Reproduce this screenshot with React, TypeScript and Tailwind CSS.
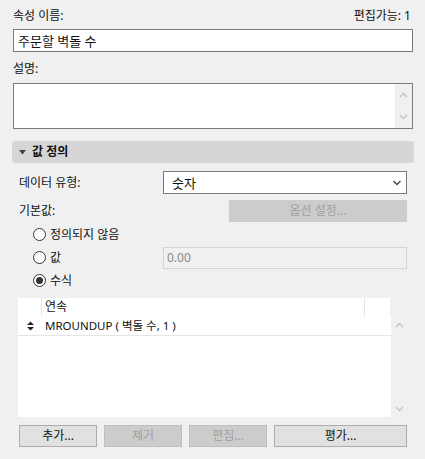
import React from "react";

const F = { fontFamily: '"Segoe UI", "Noto Sans", "Noto Sans CJK KR", sans-serif' };

function ChevUp({ c = "#c4c4c4" }: { c?: string }) {
  return (
    <svg width="9" height="6" viewBox="0 0 9 6">
      <path d="M1 5 L4.5 1.5 L8 5" fill="none" stroke={c} strokeWidth="1.5" />
    </svg>
  );
}
function ChevDown({ c = "#c4c4c4", w = 9 }: { c?: string; w?: number }) {
  return (
    <svg width={w} height="6" viewBox="0 0 9 6">
      <path d="M1 1 L4.5 4.5 L8 1" fill="none" stroke={c} strokeWidth="1.3" />
    </svg>
  );
}

function Radio({ checked, label }: { checked?: boolean; label: string }) {
  return (
    <div className="flex items-center h-[23px]">
      <div className="w-[13px] h-[13px] rounded-full border border-[#333] bg-white flex items-center justify-center">
        {checked && <div className="w-[7px] h-[7px] rounded-full bg-[#333]" />}
      </div>
      <span className="ml-[4px]">{label}</span>
    </div>
  );
}

function Btn({ label, w, disabled }: { label: string; w: string; disabled?: boolean }) {
  return (
    <div
      className={
        "h-[22px] flex items-center justify-center border " +
        w +
        (disabled
          ? " bg-[#cccccc] border-[#bfbfbf] text-[#a0a0a0]"
          : " bg-[#e1e1e1] border-[#adadad] text-[#111]")
      }
    >
      {label}
    </div>
  );
}

export default function App() {
  return (
    <div
      style={F}
      className="w-[425px] h-[459px] bg-[#f0f0f0] text-[12px] leading-[16px] text-[#111] overflow-hidden"
    >
      <div className="px-[13px]">
        <div className="flex justify-between pt-[8px] h-[29px]">
          <span>속성 이름:</span>
          <span className="mr-[1px]">편집가능: 1</span>
        </div>
        <div className="h-[23px] w-[400px] border border-[#7a7a7a] bg-white flex items-center pl-[4px] text-[13px]">
          주문할 벽돌 수
        </div>
        <div className="h-[31px] pt-[9px]">설명:</div>
        <div className="h-[46px] w-[400px] border border-[#7a7a7a] bg-white flex justify-end">
          <div className="w-[17px] bg-[#f0f0f0] flex flex-col items-center justify-between py-[8px]">
            <ChevUp />
            <ChevDown />
          </div>
        </div>
      </div>

      <div className="mx-[12px] mt-[12px] h-[22px] w-[402px] rounded-[3px] bg-[#d6d6d6] flex items-center pl-[7px] font-bold">
        <svg width="7" height="5" viewBox="0 0 7 5" className="mr-[6px]">
          <path d="M0 0 L7 0 L3.5 4.5 Z" fill="#444" />
        </svg>
        <span>값 정의</span>
      </div>

      <div className="pl-[19px] pr-[18px]">
        <div className="flex items-center justify-between mt-[8px] h-[23px]">
          <span>데이터 유형:</span>
          <div className="w-[244px] h-[23px] border border-[#7a7a7a] bg-white flex items-center justify-between pl-[8px] pr-[4px] text-[13px]">
            <span>숫자</span>
            <ChevDown c="#444" w={10} />
          </div>
        </div>
        <div className="flex items-center justify-between mt-[6px] h-[22px]">
          <span>기본값:</span>
          <div className="w-[178px] h-[22px] bg-[#cccccc] flex items-center justify-center text-[#a0a0a0]">
            옵션 설정...
          </div>
        </div>
        <div className="pl-[14px] mt-[1px]">
          <Radio label="정의되지 않음" />
          <div className="flex items-center justify-between">
            <Radio label="값" />
            <div className="w-[244px] h-[22px] border border-[#d4d4d4] bg-[#f0f0f0] flex items-center pl-[3px] text-[#8a8a8a]">
              0.00
            </div>
          </div>
          <Radio checked label="수식" />
        </div>

        <div className="mt-[6px] ml-[-1px] flex">
          <div className="w-[374px] h-[119px] flex flex-col">
            <div className="h-[18px] w-[372px] bg-white flex">
              <div className="w-[24px] border-r border-[#e3e3e3]" />
              <div className="flex-1 border-r border-[#e3e3e3] pl-[3px] flex items-center">연속</div>
              <div className="w-[25px]" />
            </div>
            <div className="flex-1 bg-white">
              <div className="h-[20px] flex items-center border-b border-[#e5e5e5]">
                <div className="w-[24px] flex justify-center">
                  <svg width="7" height="10" viewBox="0 0 7 10">
                    <path d="M0 4 L3.5 0.5 L7 4 Z M0 6 L3.5 9.5 L7 6 Z" fill="#222" />
                  </svg>
                </div>
                <span className="pl-[3px] text-[11.5px]">MROUNDUP ( 벽돌 수, 1 )</span>
              </div>
            </div>
          </div>
          <div className="w-[16px] flex flex-col items-center justify-between pt-[24px] pb-[5px]">
            <ChevUp />
            <ChevDown />
          </div>
        </div>

        <div className="flex mt-[8px] gap-[7px]">
          <Btn label="추가..." w="w-[78px]" />
          <Btn label="제거" w="w-[78px]" disabled />
          <Btn label="편집..." w="w-[78px]" disabled />
          <Btn label="평가..." w="w-[133px]" />
        </div>
      </div>
    </div>
  );
}
